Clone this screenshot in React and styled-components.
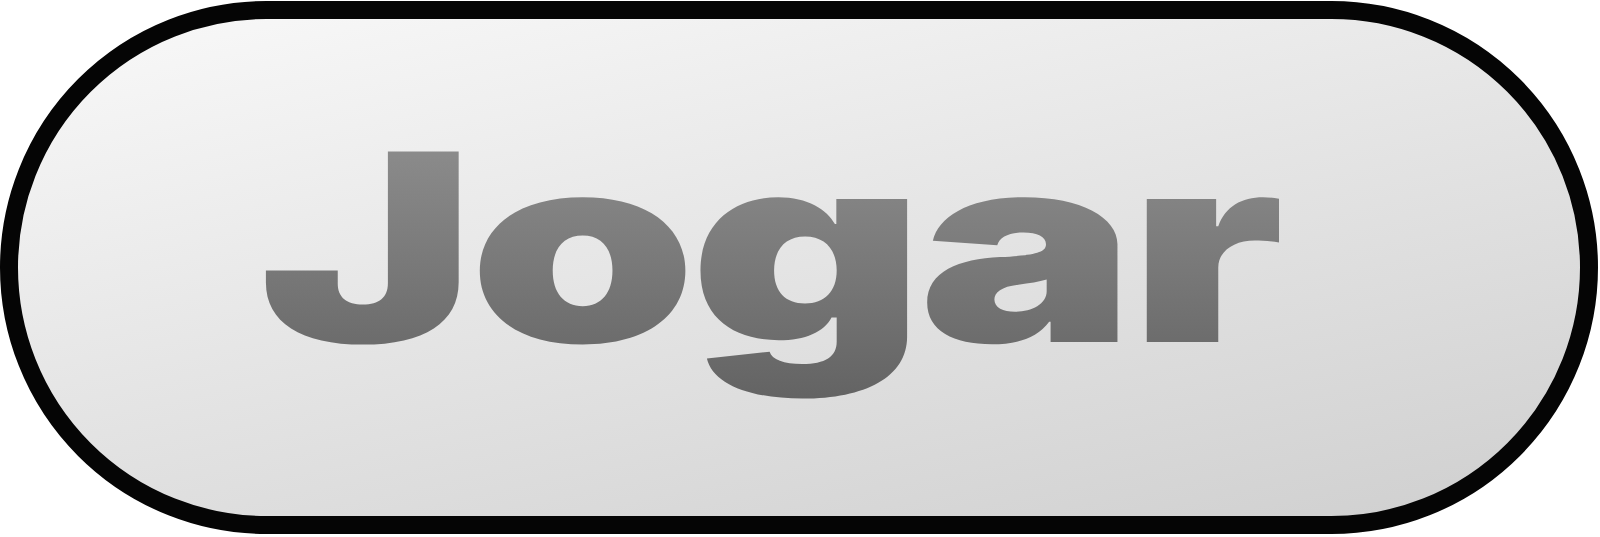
import React from "react";
import styled, { createGlobalStyle } from "styled-components";

const Global = createGlobalStyle`
  html, body { margin: 0; padding: 0; background: #ffffff; }
  #root { width: 1600px; height: 537px; }
`;

const Stage = styled.div`
  width: 1600px;
  height: 537px;
  display: flex;
  align-items: flex-start;
  justify-content: flex-start;
  padding-top: 1px;
  box-sizing: border-box;
`;

const PillButton = styled.button`
  display: flex;
  align-items: center;
  justify-content: center;
  width: 1598px;
  height: 533px;
  box-sizing: border-box;
  margin: 0;
  padding: 0;
  border: 18px solid #050505;
  border-radius: 9999px;
  background: linear-gradient(168deg, #f9f9f9 0%, #e6e6e6 45%, #cfcfcf 100%);
  cursor: pointer;
`;

const Label = styled.span`
  display: inline-block;
  padding: 0 0 60px;
  margin: 0 60px -19px 0;
  font-family: Inter, "Liberation Sans", sans-serif;
  font-weight: 900;
  font-size: 262px;
  line-height: 1;
  letter-spacing: -5px;
  transform: scaleX(1.39);
  background: linear-gradient(180deg, #8c8c8c 8%, #777777 50%, #626262 90%);
  -webkit-background-clip: text;
  background-clip: text;
  color: transparent;
`;

export default function App() {
  return (
    <>
      <Global />
      <Stage>
        <PillButton type="button">
          <Label>Jogar</Label>
        </PillButton>
      </Stage>
    </>
  );
}
